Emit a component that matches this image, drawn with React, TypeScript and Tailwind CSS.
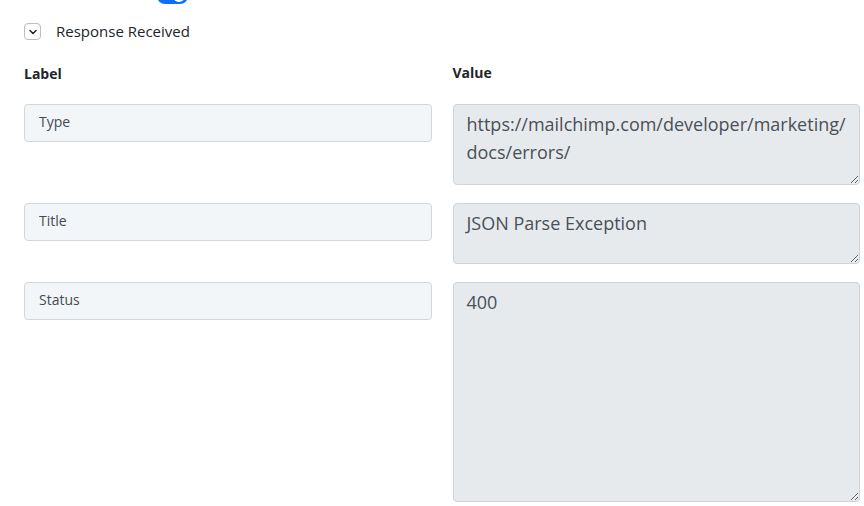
import { ChevronDown } from "lucide-react";

const rows = [
  { label: "Type", value: "https://mailchimp.com/developer/marketing/\u200Bdocs/errors/", h: "h-[81px]" },
  { label: "Title", value: "JSON Parse Exception", h: "h-[61px]" },
  { label: "Status", value: "400", h: "h-[220px]" },
];

export default function App() {
  return (
    <div className="min-h-[506px] bg-white pl-6 pr-1 text-[#212529] font-['Open_Sans','Noto_Sans',sans-serif]">
      {/* tail end of the switch above this panel */}
      <div className="ml-[133px] h-1 overflow-hidden">
        <div className="relative mt-[-12px] h-4 w-[31px] rounded-full bg-[#0d6efd]">
          <div className="absolute right-[3px] top-[2px] h-3 w-3 rounded-full bg-white" />
        </div>
      </div>

      <div className="mt-[19px] flex items-center gap-[15px]">
        <button className="flex h-[17px] w-[17px] items-center justify-center rounded-[4px] border border-[#b9bec4] bg-white">
          <ChevronDown className="h-3 w-3 text-[#212529]" strokeWidth={3} />
        </button>
        <span className="text-[15px] leading-[17px]">Response Received</span>
      </div>

      <div className="mt-[25px] grid grid-cols-2 gap-x-[21px]">
        <div className="text-[14px] font-bold leading-[17px]">Label</div>
        <div className="mt-[-1px] text-[14px] font-bold leading-[17px]">Value</div>
      </div>

      <div className="mt-[22px] flex flex-col gap-[18px]">
        {rows.map((r) => (
          <div key={r.label} className="grid grid-cols-2 items-start gap-x-[21px]">
            <input
              readOnly
              value={r.label}
              className="h-[38px] w-full rounded-[4px] border border-[#d3d7dc] bg-[#f3f6f9] px-[14px] pb-[3px] text-[14px] text-[#444a51] outline-none"
            />
            <textarea
              readOnly
              value={r.value}
              className={`${r.h} w-full rounded-[4px] border border-[#ced4da] bg-[#e7eaed] px-[13px] py-[5px] text-[18px] leading-[28px] text-[#495057] outline-none`}
            />
          </div>
        ))}
      </div>
    </div>
  );
}
